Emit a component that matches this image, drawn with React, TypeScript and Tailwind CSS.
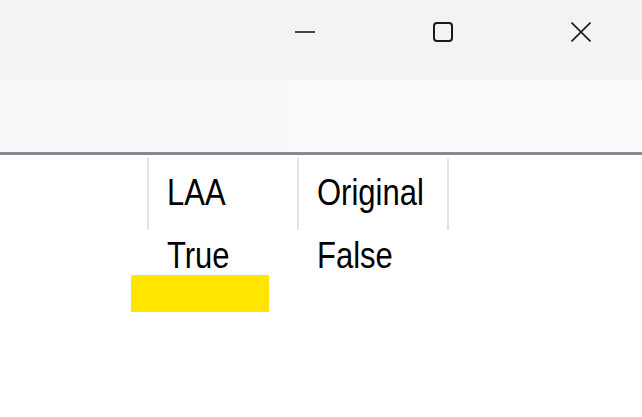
import React from "react";

const font = { fontFamily: '"Liberation Sans", Arial, sans-serif' };

const CaptionButton = ({ children, last = false }: { children: React.ReactNode; last?: boolean }) => (
  <div className={`flex h-[64px] w-[138px] items-center justify-center ${last ? "mr-[-8px]" : ""}`}>
    {children}
  </div>
);

const columns = [
  { header: "LAA", value: "True" },
  { header: "Original", value: "False" },
];

const Cell = ({ text }: { text: string }) => <span className="inline-block scale-y-[1.17]">{text}</span>;

export default function App() {
  return (
    <div className="flex h-[417px] w-[642px] flex-col overflow-hidden bg-white">
      {/* title bar */}
      <div className="flex h-[80px] shrink-0 items-start justify-end overflow-hidden bg-[#f3f3f3]">
        <CaptionButton>
          <svg width="20" height="20" viewBox="0 0 20 20">
            <path d="M0 10 H20" stroke="#1a1a1a" strokeWidth="1.6" />
          </svg>
        </CaptionButton>
        <CaptionButton>
          <svg width="20" height="20" viewBox="0 0 20 20">
            <rect x="1" y="1" width="18" height="18" rx="3" fill="none" stroke="#1a1a1a" strokeWidth="2" />
          </svg>
        </CaptionButton>
        <CaptionButton last>
          <svg width="20" height="20" viewBox="0 0 20 20">
            <path d="M0.5 0.5 L19.5 19.5 M19.5 0.5 L0.5 19.5" stroke="#1a1a1a" strokeWidth="1.6" />
          </svg>
        </CaptionButton>
      </div>

      {/* tool strip */}
      <div className="h-[72px] shrink-0 bg-gradient-to-r from-[#f7f7f7] to-[#fafafa]" />
      <div className="h-[3px] shrink-0 bg-[#868a92]" />

      {/* grid */}
      <div className="relative flex-1 text-[31px] leading-none text-black" style={font}>
        <div className="flex h-[75px] pt-[3px]">
          <div className="w-[147px] shrink-0" />
          {columns.map((c) => (
            <div key={c.header} className="flex h-[72px] w-[150px] shrink-0 items-center border-l-2 border-[#e3e3e3] pb-[3px] pl-[18px]">
              <Cell text={c.header} />
            </div>
          ))}
          <div className="h-[72px] w-0 border-l-2 border-[#e3e3e3]" />
        </div>
        <div className="flex h-[50px]">
          <div className="w-[147px] shrink-0" />
          {columns.map((c) => (
            <div key={c.value} className="flex w-[150px] shrink-0 items-center pl-[20px]">
              <Cell text={c.value} />
            </div>
          ))}
        </div>
        <div className="absolute left-[131px] top-[120px] h-[37px] w-[138px] rounded-tl-[3px] bg-[#ffe500]" />
      </div>
    </div>
  );
}
